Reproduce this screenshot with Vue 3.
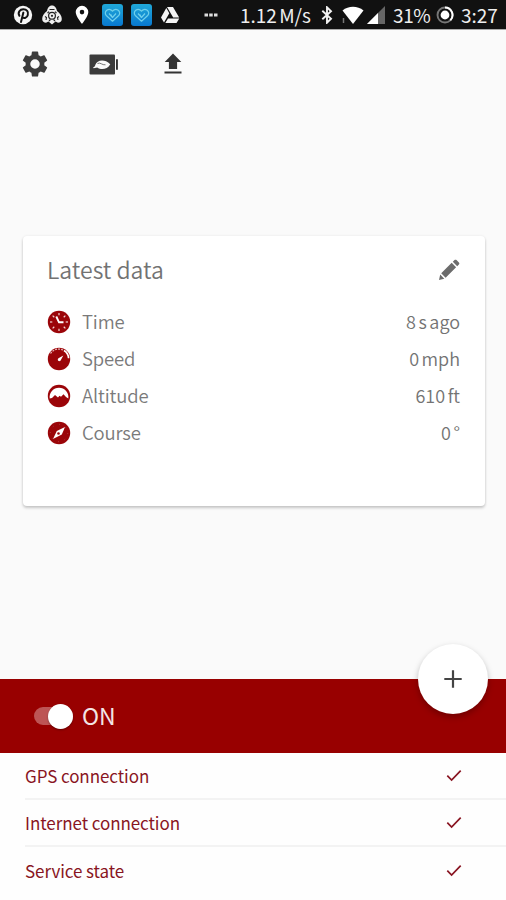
<script setup>
import { ref } from 'vue'

const enabled = ref(true)
const readings = [
  { id: 'time', label: 'Time', value: '8 s ago' },
  { id: 'speed', label: 'Speed', value: '0 mph' },
  { id: 'altitude', label: 'Altitude', value: '610 ft' },
  { id: 'course', label: 'Course', value: '0 °' },
]
const services = ['GPS connection', 'Internet connection', 'Service state']
const ticks = [0, 45, 90, 135, 180, 225, 270, 315]
</script>

<template>
  <div class="screen">
    <header class="status">
      <div class="notifications">
        <svg width="20" height="20" viewBox="0 0 20 20">
          <circle cx="10" cy="10" r="9.2" fill="#f5f5f5" />
          <path d="M6.400 10.800C4.400 7.300 7 4.300 10.300 4.300c3.500 0 5.400 2.600 4.500 5.600-.8 3-3.700 3.900-5.300 2.200M10.400 7.600 8 17" fill="none" stroke="#111" stroke-width="2" stroke-linecap="round" />
        </svg>
        <svg width="22" height="20" viewBox="0 0 22 20">
          <path d="M11 .5c3 0 4.500 2.500 5 5.500 3 2 4.800 5 4.800 8 0 2.500-1.800 3.700-3.800 3.700l-2.500-1.200L11 19.500l-3.500-3L5 17.700c-2 0-3.800-1.200-3.800-3.700 0-3 1.800-6 4.800-8C6.500 3 8 .5 11 .5z" fill="#eee" />
          <path d="M8.500 4.500h5M4 11.500l1.500 1-.5 2.500M18 11.500l-1.500 1 .5 2.500M8 16l1.500-1.500M14 16l-1.500-1.500M6.500 8 8 6.700M15.500 8 14 6.700" fill="none" stroke="#222" stroke-width="1.100" />
          <circle cx="11" cy="10.800" r="3.400" fill="none" stroke="#222" stroke-width="1.200" />
          <circle cx="11" cy="10.800" r="1.100" fill="#222" />
        </svg>
        <svg class="pin" width="14" height="20" viewBox="0 0 14 20">
          <path fill-rule="evenodd" d="M7 .8A6.300 6.300 0 0 0 .7 7.100C.7 11.500 7 19 7 19s6.300-7.500 6.300-11.900A6.300 6.300 0 0 0 7 .8zm0 4a2.300 2.300 0 1 1 0 4.600 2.300 2.300 0 0 1 0-4.600z" fill="#fff" />
        </svg>
        <svg v-for="n in 2" :key="n" class="health" width="21" height="22" viewBox="0 0 21 22">
          <defs><linearGradient :id="'blue' + n" x2="0" y2="1"><stop stop-color="#20a8d8" /><stop offset="1" stop-color="#0878cf" /></linearGradient></defs>
          <rect width="21" height="22" rx="3" :fill="`url(#blue${n})`" />
          <path d="M10.500 17.200 4.300 11.500C.9 7.800 6.900 2.700 10.500 7.200c3.600-4.500 9.600.6 6.200 4.300zM7 9.500l3.500 4L14 9.500M10.500 13.500l-1.700-3" fill="none" stroke="#6fd0ec" stroke-width="1.200" stroke-linejoin="round" />
        </svg>
        <svg class="drive" width="20" height="18" viewBox="0 0 20 18">
          <path d="M7 1h6l6.200 10.500h-6zM6.300 2 9.300 7.200 4 16.500 1 11.500zM8 12.500h11.300L16.500 17H5.300z" fill="#f5f5f5" />
        </svg>
        <svg class="more" width="14" height="4" viewBox="0 0 14 4">
          <path d="M.5 .5h3.500v3H.5zM5.200.5h3.500v3H5.200zM10 .5h3.500v3H10z" fill="#ddd" />
        </svg>
      </div>
      <div class="system">
        <span class="rate">1.12 M/s</span>
        <svg class="bt" width="12" height="18" viewBox="0 0 12 18">
          <path d="m1.300 4.800 8.700 8L6 16.700V1.300l4 3.900-8.700 8" fill="none" stroke="#f2f2f2" stroke-width="1.900" />
        </svg>
        <svg class="wifi" width="22" height="19" viewBox="0 0 22 19">
          <path d="M.5 4.500C6.500-.5 15.500-.5 21.500 4.500L11 18z" fill="#fff" />
          <path d="M1.500 12v5" stroke="#777" stroke-width="1.500" />
        </svg>
        <svg class="signal" width="18" height="18" viewBox="0 0 18 18">
          <path d="M18 0v18H0z" fill="#666" /><path d="M11 7v11H0z" fill="#fff" />
        </svg>
        <span class="percent">31%</span>
        <svg class="ring" width="18" height="18" viewBox="0 0 18 18">
          <circle cx="9" cy="9" r="7.500" fill="none" stroke="#777" stroke-width="1.900" />
          <path d="M9 1.500A7.500 7.500 0 0 1 14.300 14.300" fill="none" stroke="#fff" stroke-width="2" />
          <circle cx="9" cy="9" r="4.400" fill="#fff" />
        </svg>
        <span class="clock">3:27</span>
      </div>
    </header>

    <nav class="toolbar">
      <svg width="30" height="30" viewBox="0 0 24 24">
        <path fill="#3b3b3b" fill-rule="evenodd" d="M19.430 12.980c.04-.32.070-.64.070-.98s-.03-.66-.07-.98l2.110-1.650c.19-.15.240-.42.120-.64l-2-3.460c-.12-.22-.39-.3-.61-.22l-2.490 1c-.52-.4-1.080-.73-1.690-.98l-.38-2.650C14.460 2.180 14.250 2 14 2h-4c-.25 0-.46.180-.49.420l-.38 2.650c-.61.250-1.170.590-1.690.980l-2.490-1c-.23-.09-.49 0-.61.220l-2 3.460c-.13.220-.07.490.12.640l2.110 1.650c-.04.320-.07.650-.07.980s.03.660.07.980l-2.110 1.650c-.19.150-.24.420-.12.640l2 3.460c.12.220.39.300.61.220l2.490-1c.52.400 1.080.730 1.690.980l.38 2.650c.03.240.240.420.490.420h4c.25 0 .46-.18.490-.42l.38-2.650c.61-.25 1.170-.59 1.690-.98l2.490 1c.23.090.49 0 .61-.22l2-3.460c.12-.22.070-.49-.12-.64l-2.110-1.650zM12 15.800a3.800 3.800 0 1 1 0-7.600 3.800 3.800 0 0 1 0 7.600z" />
      </svg>
      <svg class="battery" width="30" height="21" viewBox="0 0 30 21">
        <rect x=".5" y=".5" width="25.500" height="20" rx="1" fill="#3b3b3b" />
        <path d="M27 5.200h1.900v10.500H27z" fill="#333" />
        <path d="M4 13.500c1.500-.5 2-1.300 2.500-3C7.700 6.500 15 4 21.300 10.200c-3 5.300-9 6-13.100 3.300L4.700 14.300z" fill="#fafafa" />
        <path d="M8.500 9.500c3-1.500 4.500 1.800 8 1.300" fill="none" stroke="#666" stroke-width=".9" />
      </svg>
      <svg class="upload" width="20" height="22" viewBox="0 0 20 22">
        <path d="M10 .5 18.300 9h-4.200v7H5.900V9H1.700zM1.500 18.500h17v2.100h-17z" fill="#333" />
      </svg>
    </nav>

    <main class="card">
      <div class="card-head">
        <h1>Latest data</h1>
        <svg width="24" height="24" viewBox="0 0 24 24">
          <path d="m4.200 15.300 10.500-10.500 4.400 4.400L8.600 19.700zM15.800 3.800l1.700-1.700c.6-.6 1.400-.6 2 0l2.400 2.400c.6.600.6 1.400 0 2l-1.700 1.700zM3.200 16.600l4.100 4.100-5.300 1.300z" fill="#6c6c6c" />
        </svg>
      </div>
      <div v-for="item in readings" :key="item.id" class="reading">
        <svg width="24" height="24" viewBox="0 0 24 24">
          <circle cx="12" cy="12" r="11.200" fill="#9b0509" />
          <g v-if="item.id === 'time'" stroke="#f2d5d5" fill="none">
            <path v-for="angle in ticks" :key="angle" d="M12 3v2.300" stroke-width="1.200" :transform="`rotate(${angle} 12 12)`" />
            <path d="M9.300 6.500 12 12.300h4.500" stroke="#fff" stroke-width="1.900" />
          </g>
          <g v-else-if="item.id === 'speed'">
            <path d="M3.500 6.500A10 10 0 0 1 17 3.500" fill="none" stroke="#e4b0b0" stroke-width="1.200" stroke-dasharray="2 1" />
            <path d="M17 3.500a9.800 9.800 0 0 1 4.600 7.700" fill="none" stroke="#fff" stroke-width="1.700" />
            <path d="m16.300 8.500-2.400 4.500a1.600 1.600 0 1 1-2-2z" fill="#fff" />
          </g>
          <path v-else-if="item.id === 'altitude'" d="M2.700 14.500A9.400 9.400 0 1 1 21.300 14.500L19 13l-2.500-2.700-2.500 2.400-1.500-1L11 13.500 8 11l-3 3z" fill="#fff" />
          <g v-else>
            <circle cx="12" cy="12" r="8.700" fill="none" stroke="#b64a4a" stroke-width=".8" stroke-dasharray="1 5.800" />
            <path d="m18 6-3.200 7.600L6 18l3.800-8z" fill="#fff" />
            <circle cx="11.500" cy="12.500" r="1.300" fill="#9b0509" />
          </g>
        </svg>
        <span class="name">{{ item.label }}</span>
        <span class="value">{{ item.value }}</span>
      </div>
    </main>

    <section class="power">
      <button class="toggle" :aria-pressed="enabled"><span class="knob" /></button>
      <span class="on">ON</span>
      <button class="fab">
        <svg width="20" height="20" viewBox="0 0 20 20"><path d="M10 1.300v17.400M1.300 10h17.400" stroke="#444" stroke-width="2.200" /></svg>
      </button>
    </section>

    <ul class="services">
      <li v-for="service in services" :key="service">
        <span>{{ service }}</span>
        <svg width="16" height="13" viewBox="0 0 16 13"><path d="m1.300 6.700 4.300 4.300L14.700 1.700" fill="none" stroke="#891522" stroke-width="1.700" /></svg>
      </li>
    </ul>
  </div>
</template>

<style>
body { margin: 0; background: #fafafa; }
</style>

<style scoped>
* { box-sizing: border-box; }
.screen { width: 506px; height: 900px; display: flex; flex-direction: column; overflow: hidden; background: #fafafa; color: #737373; font-family: "Noto Sans CJK SC", "Noto Sans", sans-serif; white-space: nowrap; }
svg { display: block; flex: none; }
button { border: 0; padding: 0; }
.status { height: 30px; flex: none; background: #111; border-bottom: 1px solid #aaa; color: #eee; display: flex; justify-content: space-between; }
.notifications, .system { display: flex; align-items: center; }
.notifications { padding-left: 13px; gap: 8px; }
.pin { margin-left: 4px; }
.health { margin-left: 5px; }
.health + .health { margin-left: 0; }
.more { margin-left: 16px; }
.system { font-size: 19px; line-height: 28px; padding-top: 1px; width: 266px; }
.rate { width: 72px; word-spacing: -2px; }
.bt { margin-left: 9px; }
.wifi { margin-left: 9px; }
.signal { margin-left: 3px; }
.percent { width: 37px; margin-left: 8px; letter-spacing: -.4px; }
.ring { margin-left: 6px; }
.clock { margin-left: 7px; }
.toolbar { height: 68px; flex: none; padding-left: 20px; display: flex; align-items: center; }
.battery { margin-left: 39px; }
.upload { margin-left: 44px; }
.card { margin: 138px 21px 0 23px; height: 270px; flex: none; padding: 12px 25px 0; background: #fff; border-radius: 4px; box-shadow: 0 2px 3px #0003, 0 0 3px #0001; }
.card-head { height: 44px; display: flex; align-items: center; justify-content: space-between; }
h1 { margin: 0 0 2px -1px; font-size: 23px; font-weight: 350; line-height: 40px; color: #727272; }
.card-head svg { margin-right: -1px; }
.reading { height: 37px; display: flex; align-items: center; font-size: 18.500px; font-weight: 350; color: #7a7a7a; }
.card-head + .reading { margin-top: 11px; }
.reading svg { margin-left: -1px; }
.name, .value { line-height: 28px; padding-bottom: 2px; }
.name { margin-left: 11px; letter-spacing: -.15px; }
.value { margin-left: auto; font-size: 18px; word-spacing: -1.500px; color: #737373; }
.power { height: 74px; flex: none; margin-top: 173px; padding-left: 34px; background: #980000; position: relative; display: flex; align-items: center; }
.toggle { width: 39px; height: 18px; border-radius: 9px; background: #bd5555; display: flex; align-items: center; justify-content: flex-end; }
.knob { width: 25px; height: 25px; flex: none; border-radius: 50%; background: #fff; box-shadow: 0 1px 2px #0005; }
.on { margin-left: 9px; padding-bottom: 2px; color: #f3e5e5; font-size: 23px; line-height: 30px; }
.fab { position: absolute; right: 18px; top: -35px; width: 70px; height: 70px; border-radius: 50%; background: #fff; box-shadow: 0 3px 6px #0004; display: grid; place-items: center; }
.services { flex: 1; margin: 0; padding: 0 0 0 25px; list-style: none; background: #fefefe; color: #891522; }
.services li { height: 47px; padding-right: 44px; display: flex; align-items: center; justify-content: space-between; border-bottom: 2px solid #f3f3f3; font-size: 17px; letter-spacing: -.07px; }
.services li:last-child { height: 46px; border: 0; }
</style>
